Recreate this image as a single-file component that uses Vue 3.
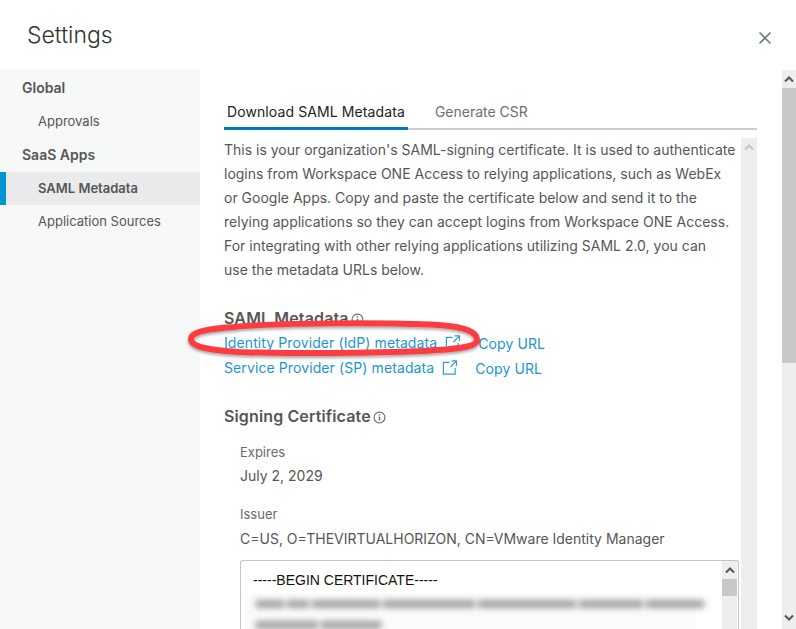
<template>
  <div class="modal">
    <header class="head">
      <h1 class="title">Settings</h1>
      <button class="close" aria-label="Close">
        <svg width="14" height="14" viewBox="0 0 14 14"><path d="M1.5 1.5 L12.5 12.5 M12.5 1.5 L1.5 12.5" stroke="#6b7a86" stroke-width="1.6" fill="none"/></svg>
      </button>
    </header>
    <div class="body">
      <nav class="side">
        <div class="group">Global</div>
        <a class="item">Approvals</a>
        <div class="group">SaaS Apps</div>
        <a class="item active">SAML Metadata</a>
        <a class="item">Application Sources</a>
      </nav>
      <main class="main">
        <div class="tabs">
          <span class="tab on">Download SAML Metadata</span>
          <span class="tab">Generate CSR</span>
        </div>
        <div class="pane">
          <div class="scrollcontent">
            <p class="intro">
              This is your organization's SAML-signing certificate. It is used to authenticate<br>
              logins from Workspace ONE Access to relying applications, such as WebEx<br>
              or Google Apps. Copy and paste the certificate below and send it to the<br>
              relying applications so they can accept logins from Workspace ONE Access.<br>
              For integrating with other relying applications utilizing SAML 2.0, you can<br>
              use the metadata URLs below.
            </p>
            <h2 class="h h1st">SAML Metadata<svg class="info" viewBox="0 0 12 12"><circle cx="6" cy="6" r="5" fill="none" stroke="#666" stroke-width="1"/><path d="M6 5.2v3.6M6 3v1.2" stroke="#666" stroke-width="1.3"/></svg></h2>
            <div class="linkrow" v-for="r in rows" :key="r.label" :class="r.cls">
              <a class="link">{{ r.label }}</a>
              <svg class="ext" viewBox="0 0 16 16"><path d="M8 2.5H1.5v12.5h12.5V8.5M9 7.5 15 1.5M10.2 1h5.3v5.3" fill="none" stroke="#2a9bd6" stroke-width="1.25"/></svg>
              <a class="link copy">Copy URL</a>
            </div>
            <h2 class="h h2nd">Signing Certificate<svg class="info" viewBox="0 0 12 12"><circle cx="6" cy="6" r="5" fill="none" stroke="#666" stroke-width="1"/><path d="M6 5.2v3.6M6 3v1.2" stroke="#666" stroke-width="1.3"/></svg></h2>
            <div class="fields">
              <div class="lbl">Expires</div>
              <div class="val">July 2, 2029</div>
              <div class="lbl second">Issuer</div>
              <div class="val">C=US, O=THEVIRTUALHORIZON, CN=VMware Identity Manager</div>
              <div class="cert">
                <div class="certtext">
                  <div class="begin">-----BEGIN CERTIFICATE-----</div>
                  <div class="blurwrap">
                    <div class="barrow">
                      <span v-for="(w, i) in seg1" :key="i" class="bar" :style="{ width: w + 'px' }"></span>
                    </div>
                    <div class="barrow second-row">
                      <span v-for="(w, i) in seg2" :key="i" class="bar" :style="{ width: w + 'px' }"></span>
                    </div>
                  </div>
                </div>
                <div class="sb sbcert">
                  <span class="arrow"><svg width="10" height="7" viewBox="0 0 10 7"><path d="M1 5.5 5 1.5 9 5.5" fill="none" stroke="#555" stroke-width="2"/></svg></span>
                  <span class="thumb t3"></span>
                </div>
              </div>
            </div>
          </div>
          <div class="sb sbpane">
            <span class="arrow"><svg width="10" height="7" viewBox="0 0 10 7"><path d="M1 5.5 5 1.5 9 5.5" fill="none" stroke="#c4c4c4" stroke-width="2"/></svg></span>
          </div>
        </div>
      </main>
      <div class="sb sbouter">
        <span class="arrow a1"><svg width="10" height="7" viewBox="0 0 10 7"><path d="M1 5.5 5 1.5 9 5.5" fill="none" stroke="#555" stroke-width="2"/></svg></span>
        <span class="thumb t1"></span>
        <span class="fill"></span>
        <span class="arrow a2"><svg width="10" height="7" viewBox="0 0 10 7"><path d="M1 1.5 5 5.5 9 1.5" fill="none" stroke="#555" stroke-width="2"/></svg></span>
      </div>
    </div>
    <svg class="oval" width="300" height="42" viewBox="0 0 300 42">
      <defs><filter id="sh" x="-5%" y="-30%" width="110%" height="170%"><feDropShadow dx="0" dy="2" stdDeviation="1.5" flood-color="#000" flood-opacity="0.35"/></filter></defs>
      <path d="M7 20 C7 13 22 10 50 8 C90 4 200 3 255 6 C282 8 293 13 293 21 C293 28 275 30 240 32 C190 34 100 35 55 33 C25 31 7 28 7 20 Z" fill="none" stroke="#fb3d42" stroke-width="6" filter="url(#sh)"/>
    </svg>
  </div>
</template>

<script setup>
const rows = [
  { label: 'Identity Provider (IdP) metadata', cls: 'r1' },
  { label: 'Service Provider (SP) metadata', cls: 'r2' }
]
const seg1 = [30, 24, 70, 94, 100, 66, 60]
const seg2 = [64, 62]
</script>

<style>
html, body { margin: 0; background: #fff; overflow: hidden; }
</style>

<style scoped>
.modal {
  position: relative;
  width: 796px;
  height: 629px;
  overflow: hidden;
  background: #fff;
  font-family: Inter, "Open Sans", sans-serif;
  color: #565656;
  font-size: 14px;
}
.head { height: 70px; display: flex; justify-content: space-between; align-items: flex-start; box-sizing: border-box; padding: 0 24px 0 27px; }
.title { margin: 17px 0 0; font-size: 23px; line-height: 36px; font-weight: 300; color: #333; }
.close { margin: 31px 0 0; padding: 0; border: 0; background: none; width: 14px; height: 14px; line-height: 0; }
.body { display: flex; height: 559px; }
.side { width: 200px; flex: none; background: #f7f8f8; box-sizing: border-box; padding-top: 1px; }
.item { display: block; height: 33.5px; line-height: 33px; padding-left: 38px; font-size: 13px; color: #565656; box-sizing: border-box; }
.group { display: flex; align-items: center; height: 33.5px; padding-left: 22px; font-weight: 600; color: #565656; }
.item.active { background: #e9eaeb; border-left: 6px solid #0095d3; padding-left: 32px; font-weight: 600; }
.main { width: 582px; flex: none; box-sizing: border-box; padding: 30px 25px 0 24px; display: flex; flex-direction: column; }
.tabs { height: 28px; border-bottom: 2px solid #ccc; display: flex; gap: 24px; box-sizing: content-box; }
.tab { padding: 0 3px; line-height: 24px; color: #6f6f6f; font-size: 14px; box-sizing: border-box; }
.tab.on { color: #222; border-bottom: 3px solid #0079b8; height: 30px; letter-spacing: 0.1px; }
.pane { display: flex; margin-top: 8px; height: 491px; overflow: hidden; }
.scrollcontent { width: 517px; flex: none; }
.intro { margin: 0; line-height: 24px; font-size: 14px; }
.h { margin: 0; font-size: 16px; font-weight: 600; color: #565656; line-height: 24px; display: flex; align-items: center; letter-spacing: 0.13px; }
.h1st { margin-top: 24px; }
.info { width: 13px; height: 13px; margin-left: 2px; margin-top: 2px; }
.linkrow { display: flex; align-items: center; height: 25px; }
.link { color: #1a96d4; font-size: 14px; letter-spacing: 0.1px; }
.ext { width: 15px; height: 15px; margin-left: 8px; }
.copy { margin-left: 18px; position: relative; top: 1px; }
.h2nd { margin-top: 24px; }
.fields { padding-left: 16px; margin-top: 12px; }
.lbl { font-size: 13px; line-height: 24px; color: #6a6a6a; }
.val { line-height: 24px; font-size: 14px; }
.second { margin-top: 14px; line-height: 25px; }
.cert { margin-top: 9px; width: 499px; height: 120px; border: 1px solid #c4c4c4; border-bottom: 0; border-radius: 3px 3px 0 0; display: flex; box-sizing: border-box; }
.certtext { flex: 1; padding: 10px 0 0 12px; min-width: 0; }
.begin { font-family: "Liberation Sans", Arial, sans-serif; font-size: 14px; line-height: 18px; color: #111; }
.blurwrap { margin: 5px 26px 0 -8px; padding: 6px 4px 0 6px; background: #fbfbfb; height: 60px; }
.barrow { display: flex; gap: 1px; margin-left: 4px; }
.bar { display: block; height: 8px; background: #a0a0a0; filter: blur(3px); border-radius: 4px; flex: none; }
.second-row { margin-top: 13px; }
.sb { background: #eee; display: flex; flex-direction: column; flex: none; }
.arrow { display: flex; align-items: center; justify-content: center; height: 18px; flex: none; }
.thumb { display: block; background: #c8c8c8; flex: none; }
.sbcert { width: 15px; margin-right: 1px; }
.t3 { height: 17px; }
.sbpane { width: 16px; }
.sbouter { width: 14px; height: 559px; }
.t1 { height: 275px; }
.fill { flex: 1; }
.a2 { height: 24px; }
.oval { position: absolute; left: 184px; top: 319px; pointer-events: none; }
</style>
